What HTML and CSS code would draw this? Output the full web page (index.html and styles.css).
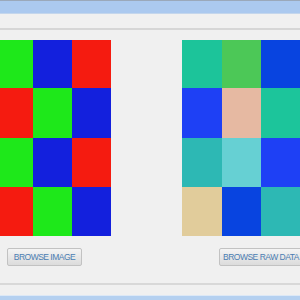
FILE: index.html
```html
<!DOCTYPE html>
<html lang="en">
<head>
    <meta charset="UTF-8">
    <title>Image Viewer</title>
    <link rel="stylesheet" href="styles.css">
</head>
<body>
    <div class="titlebar"></div>
    <div class="toolbar"></div>
    <div class="content">
        <div class="panel left">
            <div class="grid">
                <div class="cell green"></div><div class="cell blue"></div><div class="cell red"></div>
                <div class="cell red"></div><div class="cell green"></div><div class="cell blue"></div>
                <div class="cell green"></div><div class="cell blue"></div><div class="cell red"></div>
                <div class="cell red"></div><div class="cell green"></div><div class="cell blue"></div>
            </div>
            <button class="btn">BROWSE IMAGE</button>
        </div>
        <div class="panel right">
            <div class="grid">
                <div class="cell c1"></div><div class="cell c2"></div><div class="cell c3"></div>
                <div class="cell c4"></div><div class="cell c5"></div><div class="cell c6"></div>
                <div class="cell c7"></div><div class="cell c8"></div><div class="cell c4"></div>
                <div class="cell c9"></div><div class="cell c3"></div><div class="cell c7"></div>
            </div>
            <button class="btn">BROWSE RAW DATA</button>
        </div>
    </div>
    <div class="statusbar"></div>
    <div class="taskbar"></div>
</body>
</html>
```

FILE: styles.css
```css
body {
    margin: 0;
    width: 300px;
    height: 300px;
    overflow: hidden;
    background: #f0f0f0;
    font-family: "Liberation Sans", Arial, sans-serif;
}
.titlebar {
    height: 12px;
    background: #abc9ef;
    border-top: 1px solid #9aa8ba;
    border-bottom: 1px solid #c4d6ec;
}
.toolbar {
    height: 14px;
    border-bottom: 2px solid #d6d6d6;
}
.content {
    display: flex;
    height: 253px;
    border-bottom: 2px solid #d8d8d8;
}
.panel {
    display: flex;
    flex-direction: column;
    flex-shrink: 0;
    padding-top: 10px;
}
.left {
    margin-left: -7px;
    width: 189px;
}
.right {
    width: 160px;
}
.grid {
    display: grid;
    grid-template-columns: 40px 39px 39px;
    grid-template-rows: 48px 50px 49px 49px;
}
.right .grid {
    grid-template-columns: 40px 39px 40px;
}
.green { background: #1ee81a; }
.blue { background: #1320dd; }
.red { background: #f51b10; }
.c1 { background: #1cc49a; }
.c2 { background: #4cc857; }
.c3 { background: #0844e0; }
.c4 { background: #1e40f5; }
.c5 { background: #e6b9a2; }
.c6 { background: #1cc59b; }
.c7 { background: #2db8b4; }
.c8 { background: #66d0d3; }
.c9 { background: #e1cc9b; }
.btn {
    align-self: flex-start;
    margin-top: 12px;
    height: 18px;
    padding: 0 3px;
    border: 1px solid #c2c2c2;
    border-radius: 2px;
    background: linear-gradient(#f4f4f4, #dcdcdc);
    color: #4a7db2;
    font-family: "Liberation Sans", Arial, sans-serif;
    font-size: 8.5px;
    letter-spacing: -0.5px;
    white-space: nowrap;
}
.left .btn {
    margin-left: 14px;
    width: 75px;
    text-align: center;
}
.right .btn {
    margin-left: 37px;
    width: 90px;
    text-align: left;
}
.statusbar {
    height: 10px;
}
.taskbar {
    height: 6px;
    background: #b4d0f0;
    border-top: 1px solid #dce8f6;
}
```
